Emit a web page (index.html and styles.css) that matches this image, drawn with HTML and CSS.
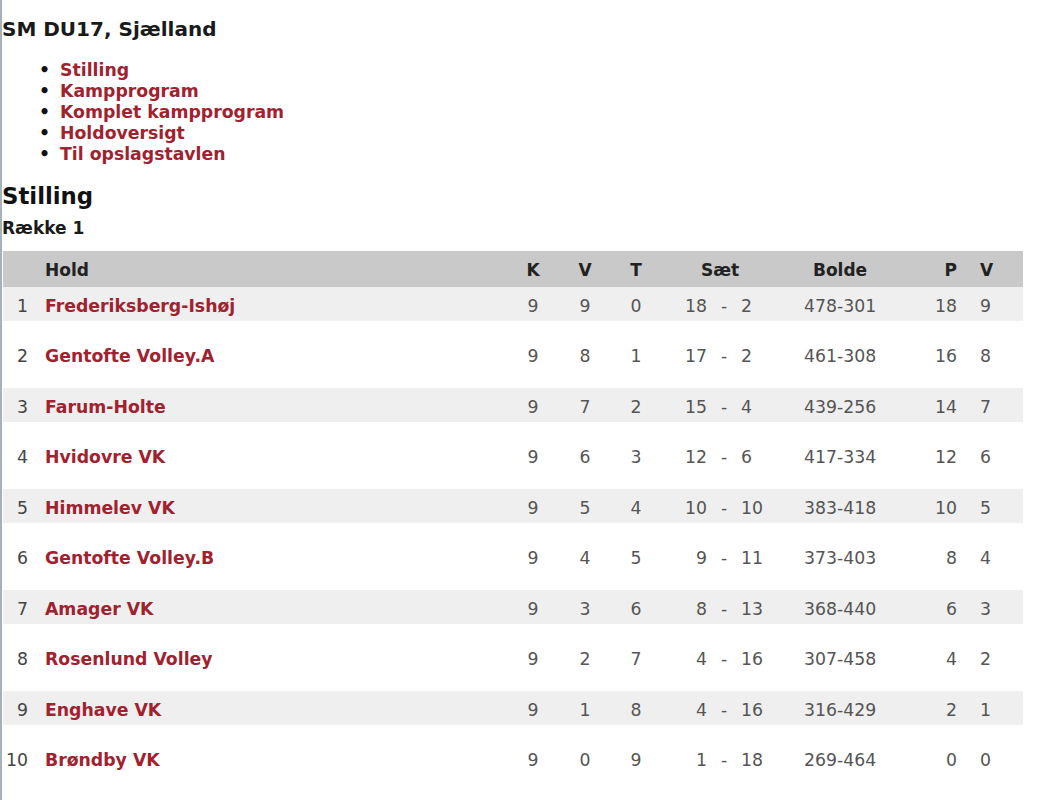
FILE: index.html
```html
<!DOCTYPE html>
<html lang="da">
<head>
<meta charset="utf-8">
<title>SM DU17, Sjælland</title>
<link rel="stylesheet" href="styles.css">
</head>
<body>
<div class="page">
  <h1 class="title">SM DU17, Sjælland</h1>
  <ul class="menu">
    <li><a href="#">Stilling</a></li>
    <li><a href="#">Kampprogram</a></li>
    <li><a href="#">Komplet kampprogram</a></li>
    <li><a href="#">Holdoversigt</a></li>
    <li><a href="#">Til opslagstavlen</a></li>
  </ul>
  <h2 class="section">Stilling</h2>
  <h3 class="pool">Række 1</h3>
  <table class="standings">
    <colgroup>
      <col class="c-rank"><col class="c-team"><col class="c-k"><col class="c-v"><col class="c-t">
      <col class="c-s1"><col class="c-s2"><col class="c-s3"><col class="c-b"><col class="c-p"><col class="c-v2">
    </colgroup>
    <thead>
      <tr>
        <th class="rank"></th>
        <th class="team">Hold</th>
        <th class="num">K</th>
        <th class="num">V</th>
        <th class="num">T</th>
        <th class="num" colspan="3">Sæt</th>
        <th class="num">Bolde</th>
        <th class="pts">P</th>
        <th class="last">V</th>
      </tr>
    </thead>
    <tbody>
      <tr class="odd"><td class="rank">1</td><td class="team"><a href="#">Frederiksberg-Ishøj</a></td><td class="num">9</td><td class="num">9</td><td class="num">0</td><td class="s1">18</td><td class="s2">-</td><td class="s3">2</td><td class="num">478-301</td><td class="pts">18</td><td class="last">9</td></tr>
      <tr class="even"><td class="rank">2</td><td class="team"><a href="#">Gentofte Volley.A</a></td><td class="num">9</td><td class="num">8</td><td class="num">1</td><td class="s1">17</td><td class="s2">-</td><td class="s3">2</td><td class="num">461-308</td><td class="pts">16</td><td class="last">8</td></tr>
      <tr class="odd"><td class="rank">3</td><td class="team"><a href="#">Farum-Holte</a></td><td class="num">9</td><td class="num">7</td><td class="num">2</td><td class="s1">15</td><td class="s2">-</td><td class="s3">4</td><td class="num">439-256</td><td class="pts">14</td><td class="last">7</td></tr>
      <tr class="even"><td class="rank">4</td><td class="team"><a href="#">Hvidovre VK</a></td><td class="num">9</td><td class="num">6</td><td class="num">3</td><td class="s1">12</td><td class="s2">-</td><td class="s3">6</td><td class="num">417-334</td><td class="pts">12</td><td class="last">6</td></tr>
      <tr class="odd"><td class="rank">5</td><td class="team"><a href="#">Himmelev VK</a></td><td class="num">9</td><td class="num">5</td><td class="num">4</td><td class="s1">10</td><td class="s2">-</td><td class="s3">10</td><td class="num">383-418</td><td class="pts">10</td><td class="last">5</td></tr>
      <tr class="even"><td class="rank">6</td><td class="team"><a href="#">Gentofte Volley.B</a></td><td class="num">9</td><td class="num">4</td><td class="num">5</td><td class="s1">9</td><td class="s2">-</td><td class="s3">11</td><td class="num">373-403</td><td class="pts">8</td><td class="last">4</td></tr>
      <tr class="odd"><td class="rank">7</td><td class="team"><a href="#">Amager VK</a></td><td class="num">9</td><td class="num">3</td><td class="num">6</td><td class="s1">8</td><td class="s2">-</td><td class="s3">13</td><td class="num">368-440</td><td class="pts">6</td><td class="last">3</td></tr>
      <tr class="even"><td class="rank">8</td><td class="team"><a href="#">Rosenlund Volley</a></td><td class="num">9</td><td class="num">2</td><td class="num">7</td><td class="s1">4</td><td class="s2">-</td><td class="s3">16</td><td class="num">307-458</td><td class="pts">4</td><td class="last">2</td></tr>
      <tr class="odd"><td class="rank">9</td><td class="team"><a href="#">Enghave VK</a></td><td class="num">9</td><td class="num">1</td><td class="num">8</td><td class="s1">4</td><td class="s2">-</td><td class="s3">16</td><td class="num">316-429</td><td class="pts">2</td><td class="last">1</td></tr>
      <tr class="even"><td class="rank">10</td><td class="team"><a href="#">Brøndby VK</a></td><td class="num">9</td><td class="num">0</td><td class="num">9</td><td class="s1">1</td><td class="s2">-</td><td class="s3">18</td><td class="num">269-464</td><td class="pts">0</td><td class="last">0</td></tr>
    </tbody>
  </table>
</div>
</body>
</html>
```

FILE: styles.css
```css
html, body {
  margin: 0;
  padding: 0;
  background: #ffffff;
}

body {
  font-family: "DejaVu Sans", Verdana, sans-serif;
  color: #1e1e1e;
}

.page {
  border-left: 2px solid #a7b1ba;
  padding: 17px 0 0 0;
  min-height: 783px;
}

.title {
  margin: 0;
  font-size: 20px;
  line-height: 24px;
  font-weight: bold;
  color: #1a1a1a;
}

.menu {
  margin: 19px 0 0 0;
  padding: 0 0 0 58px;
  list-style: none;
  font-size: 17.3px;
  line-height: 21px;
  font-weight: bold;
  color: #1a1a1a;
}

.menu li {
  height: 21px;
}

.menu li::before {
  content: "•";
  display: inline-block;
  width: 21px;
  margin-left: -21px;
  line-height: 21px;
  vertical-align: top;
  color: #111;
}

.menu a {
  color: #a1222f;
  text-decoration: none;
}

.section {
  margin: 17px 0 0 0;
  font-size: 22.8px;
  line-height: 28px;
  font-weight: bold;
  color: #111;
}

.pool {
  margin: 8px 0 0 0;
  font-size: 17px;
  line-height: 20px;
  font-weight: bold;
  color: #1a1a1a;
}

.standings {
  margin: 13px 0 0 1px;
  width: 1020px;
  table-layout: fixed;
  border-collapse: collapse;
  font-size: 17.3px;
  color: #555;
}

.c-rank { width: 31px; }
.c-team { width: 474px; }
.c-k { width: 50px; }
.c-v { width: 54px; }
.c-t { width: 48px; }
.c-s1 { width: 47px; }
.c-s2 { width: 34px; }
.c-s3 { width: 39px; }
.c-b { width: 120px; }
.c-p { width: 63px; }
.c-v2 { width: 60px; }

.standings th {
  background: #c9c9c9;
  height: 36px;
  padding: 2px 0 0 0;
  box-sizing: border-box;
  font-weight: bold;
  color: #222;
  font-size: 17px;
}

.standings td {
  padding: 3px 0 0 0;
  box-sizing: border-box;
  white-space: nowrap;
}

.standings tr.odd td {
  background: #efefef;
  height: 34px;
}

.standings tr.even td {
  height: 67px;
}

.standings .rank {
  text-align: right;
  padding-right: 6px;
  color: #444;
}

.standings .team {
  text-align: left;
  padding-left: 11px;
  overflow: hidden;
}

.team a {
  color: #a1222f;
  text-decoration: none;
  font-weight: bold;
}

.num {
  text-align: center;
}

.s1 {
  text-align: right;
}

.s2 {
  text-align: center;
}

.s3 {
  text-align: left;
}

.standings .pts {
  text-align: right;
  padding-right: 6px;
}

.standings .last {
  text-align: left;
  padding-left: 17px;
}
```
